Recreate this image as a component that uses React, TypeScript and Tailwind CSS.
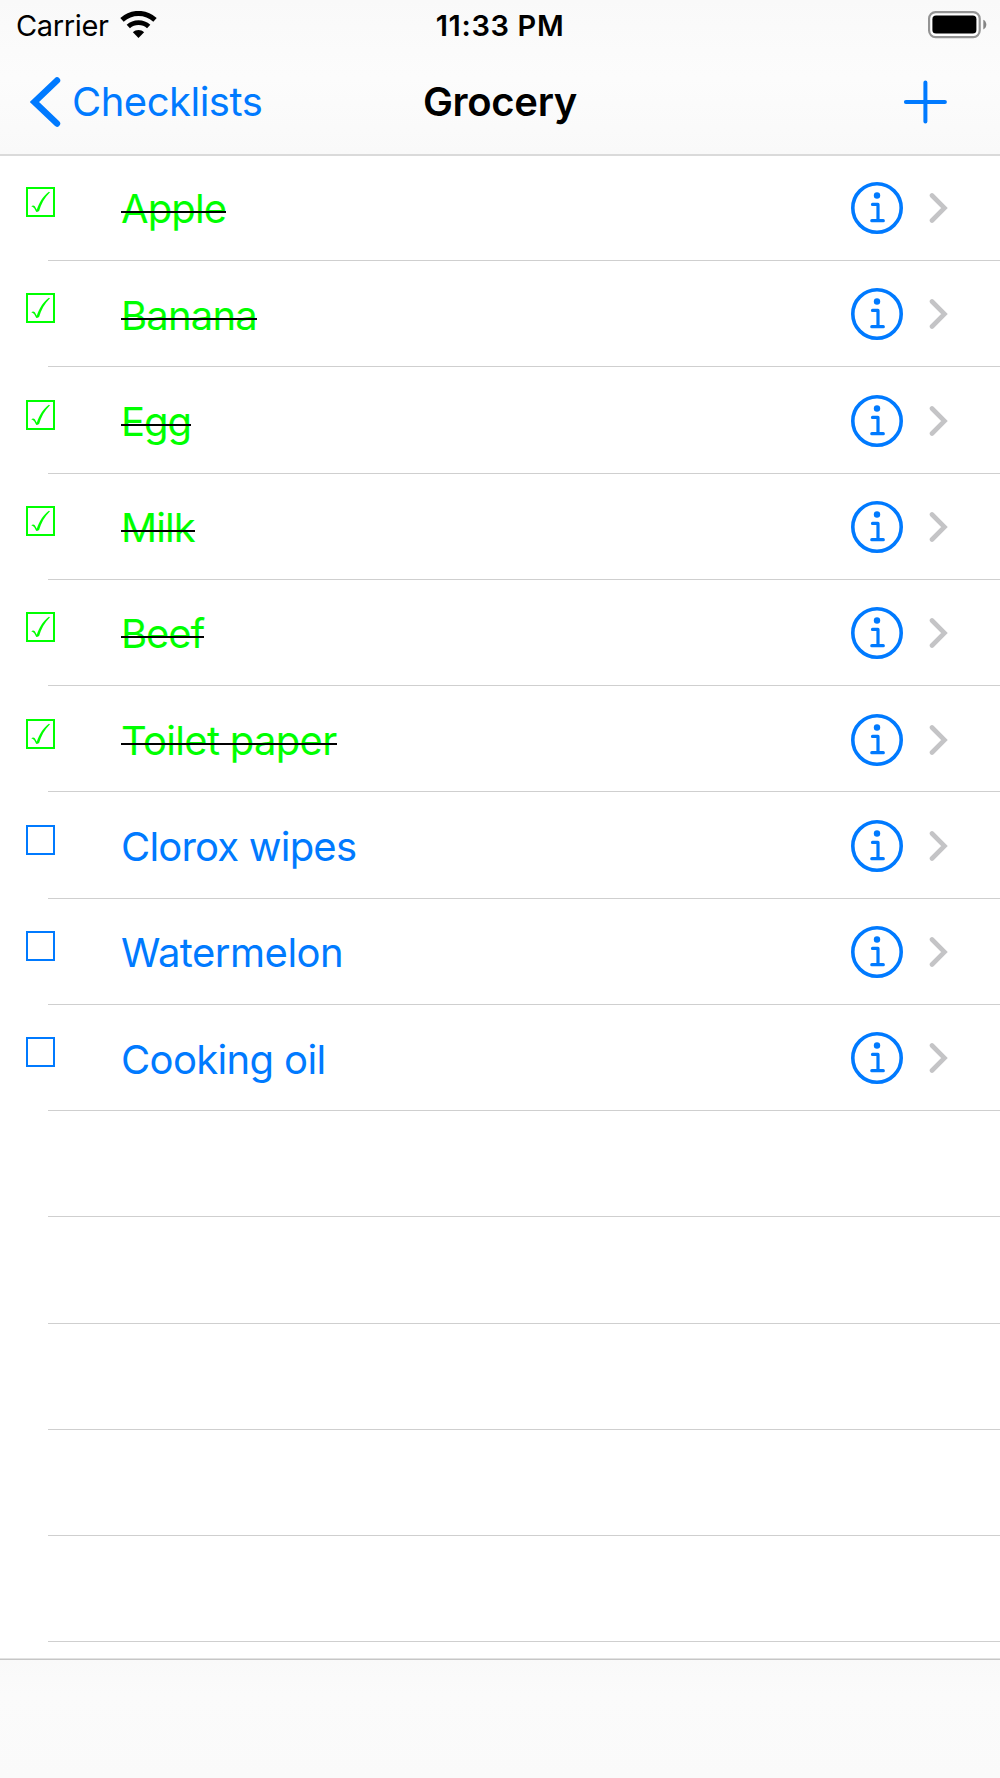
import clsx from "clsx";

type Item = {
  name: string;
  done: boolean;
  // letter spacing per label
  tracking: string;
};

const items: Item[] = [
  { name: "Apple", done: true, tracking: "tracking-[-0.9px]" },
  { name: "Banana", done: true, tracking: "tracking-[-0.8px]" },
  { name: "Egg", done: true, tracking: "tracking-[-1px]" },
  { name: "Milk", done: true, tracking: "tracking-[-0.95px]" },
  { name: "Beef", done: true, tracking: "tracking-[-1.1px]" },
  { name: "Toilet paper", done: true, tracking: "tracking-[-0.7px]" },
  { name: "Clorox wipes", done: false, tracking: "tracking-[-0.8px]" },
  { name: "Watermelon", done: false, tracking: "tracking-[-0.5px]" },
  { name: "Cooking oil", done: false, tracking: "tracking-[-0.65px]" },
];

const emptyRows = [0, 1, 2, 3, 4];

export default function App() {
  return (
    <div className="flex h-[1778px] w-[1000px] flex-col overflow-hidden bg-white font-['Inter','Liberation_Sans',sans-serif] text-black">
      <header className="h-[156px] shrink-0 border-b-2 border-[#dadada] bg-linear-to-b from-[#f9f9f9] via-[#fcfcfc] to-[#f9f9f9]">
        <StatusBar />
        <NavBar />
      </header>

      <main className="-mt-[1.25px] h-[1504.25px] shrink-0 overflow-hidden border-b border-[#e2e2e2]">
        <ul>
          {items.map((item) => (
            <Row key={item.name} item={item} />
          ))}
          {emptyRows.map((n) => (
            <li key={n} className="ml-12 h-[106.28px] border-b border-[#cfcfcf]" />
          ))}
        </ul>
      </main>

      <footer className="flex-1 border-t border-[#c6c6c6] bg-linear-to-b from-[#f9f9f9] via-[#fbfbfb] via-30% to-[#fafafa]" />
    </div>
  );
}

function StatusBar() {
  return (
    <div className="grid h-[50px] grid-cols-[1fr_auto_1fr] items-center text-[29px] leading-none">
      <div className="flex items-center pl-4">
        <span className="w-[104px] pt-px tracking-[-0.35px] whitespace-nowrap">Carrier</span>
        <WifiIcon />
      </div>
      <span className="pt-px font-[580] tracking-[0.65px]">11:33 PM</span>
      <div className="flex justify-end pr-[13px]">
        <BatteryIcon />
      </div>
    </div>
  );
}

function NavBar() {
  return (
    <nav className="grid h-[103px] grid-cols-[1fr_auto_1fr] items-center text-[40px] leading-none">
      <a className="flex items-center pl-[30px] text-[#007aff]">
        <svg width="32" height="52" viewBox="0 0 32 52" fill="none">
          <path
            d="M27 4.5L4.5 26L27 47.5"
            stroke="currentColor"
            strokeWidth="6.4"
            strokeLinecap="round"
          />
        </svg>
        <span className="ml-[10px] pt-px tracking-[-0.5px]">Checklists</span>
      </a>
      <h1 className="pt-px font-semibold tracking-[-0.3px]">Grocery</h1>
      <div className="flex justify-end pr-[53px] text-[#007aff]">
        <svg width="44" height="44" viewBox="0 0 44 44" fill="none">
          <path
            d="M22.4 2.5V41.5M2.9 22H41.9"
            stroke="currentColor"
            strokeWidth="4"
            strokeLinecap="round"
          />
        </svg>
      </div>
    </nav>
  );
}

function Row({ item }: { item: Item }) {
  return (
    <li
      className={clsx(
        "flex h-[106.28px] flex-col",
        item.done ? "text-[#00ff00]" : "text-[#007aff]",
      )}
    >
      <div className="flex flex-1 items-center pt-[1.6px] pr-[52px] pl-[26px]">
        <div className="mb-[12px] w-[95px]">
          <Checkbox checked={item.done} />
        </div>
        <span
          className={clsx(
            "relative pt-[2.5px] text-[40px] leading-none whitespace-nowrap",
            item.tracking,
          )}
        >
          {item.name}
          {item.done && (
            <span className="absolute inset-x-0 top-[24.5px] h-0 border-t-2 border-black" />
          )}
        </span>
        <span className="ml-auto flex items-center gap-[26px]">
          <InfoIcon />
          <svg width="19" height="32" viewBox="0 0 19 32" fill="none">
            <path d="M3 3.5L15.5 16L3 28.5" stroke="#c4c4c6" strokeWidth="4.6" strokeLinecap="round" />
          </svg>
        </span>
      </div>
      <div className="ml-12 h-0 shrink-0 border-b border-[#cfcfcf]" />
    </li>
  );
}

function Checkbox({ checked }: { checked: boolean }) {
  return (
    <svg width="29" height="30" viewBox="0 0 29 30" fill="none">
      <rect x="1" y="1" width="27" height="28" stroke="currentColor" strokeWidth="2" />
      {checked && (
        <path
          d="M5.3 19.4C6.8 18 8.9 18.4 9.5 20.6L10.8 22.8C13 16.1 17 8.9 22.9 4.7L24 5.2C18.5 10.5 15 17.1 13.1 24.1C12 24.9 11 25.1 10.2 24.7C9.1 22.6 8.4 20.1 5.3 19.4Z"
          fill="currentColor"
        />
      )}
    </svg>
  );
}

function InfoIcon() {
  return (
    <svg width="52" height="52" viewBox="0 0 52 52" fill="none" className="text-[#007aff]">
      <circle cx="26" cy="26" r="24.2" stroke="currentColor" strokeWidth="3.6" />
      <circle cx="26" cy="13.5" r="3.2" fill="currentColor" />
      <path
        d="M21.5 22.4H27V38.7M20.8 38.7H32.3"
        stroke="currentColor"
        strokeWidth="3.2"
        strokeLinecap="round"
        strokeLinejoin="round"
      />
    </svg>
  );
}

function WifiIcon() {
  return (
    <svg width="37" height="27" viewBox="0 0 37 27" fill="none" className="-mt-[2px]">
      <path d="M2 8.9C11.5 0.2 25.5 0.2 35 8.9" stroke="black" strokeWidth="5" />
      <path d="M8.3 15.5C14 10.2 23 10.2 28.7 15.5" stroke="black" strokeWidth="4.8" />
      <path d="M12.9 21.3C16 18.3 21 18.3 24.1 21.3L18.5 27Z" fill="black" />
    </svg>
  );
}

function BatteryIcon() {
  return (
    <svg width="59" height="28" viewBox="0 0 59 28" fill="none" className="-mt-px">
      <rect x="1.1" y="1.1" width="50.6" height="25" rx="6.5" fill="white" stroke="#949494" strokeWidth="2.2" />
      <rect x="4.4" y="4.6" width="44" height="18" rx="3.6" fill="black" />
      <path d="M55.3 8.7C59.3 10.3 59.3 16.9 55.3 18.5Z" fill="#858585" />
    </svg>
  );
}
